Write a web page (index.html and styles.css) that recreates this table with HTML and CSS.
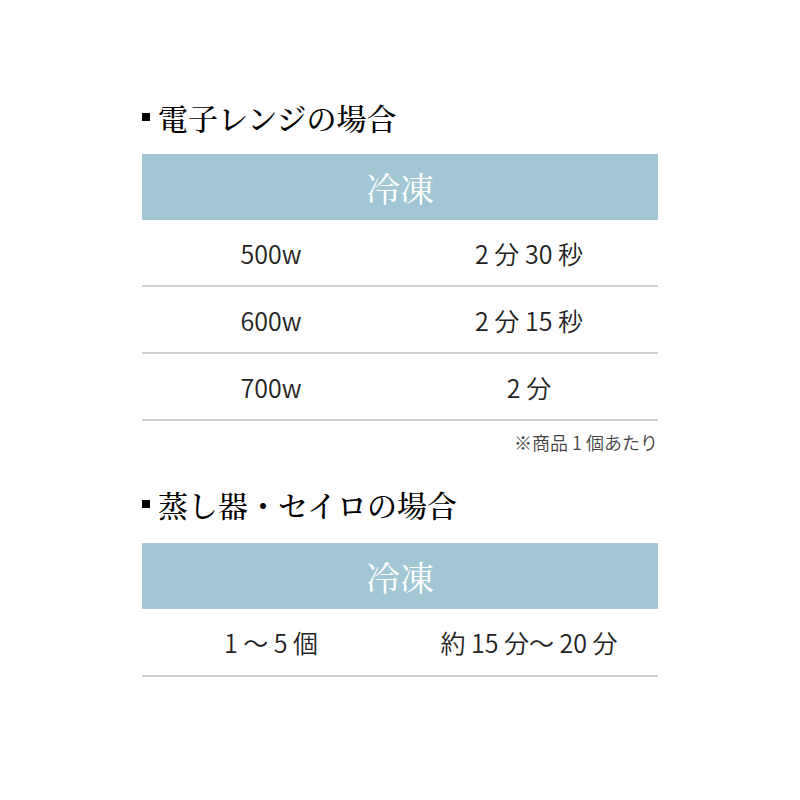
FILE: index.html
```html
<!DOCTYPE html>
<html lang="ja">
<head>
<meta charset="utf-8">
<link rel="stylesheet" href="styles.css">
</head>
<body>
<main class="page">
  <section class="block block-first">
    <h2 class="heading"><span class="bullet"></span>電子レンジの場合</h2>
    <table class="tbl">
      <thead>
        <tr><th colspan="2">冷凍</th></tr>
      </thead>
      <tbody>
        <tr><td>500w</td><td>2 分 30 秒</td></tr>
        <tr><td>600w</td><td>2 分 15 秒</td></tr>
        <tr><td>700w</td><td>2 分</td></tr>
      </tbody>
    </table>
    <p class="note">※商品 1 個あたり</p>
  </section>
  <section class="block block-second">
    <h2 class="heading"><span class="bullet"></span>蒸し器・セイロの場合</h2>
    <table class="tbl">
      <thead>
        <tr><th colspan="2">冷凍</th></tr>
      </thead>
      <tbody>
        <tr><td>1 ～ 5 個</td><td>約 15 分～ 20 分</td></tr>
      </tbody>
    </table>
  </section>
</main>
</body>
</html>
```
FILE: styles.css
```css
html, body {
  margin: 0;
  padding: 0;
  background: #ffffff;
}
.page {
  width: 516px;
  margin: 0 auto;
  padding-top: 99px;
  font-family: "Noto Sans CJK JP", sans-serif;
  color: #222;
}
.heading {
  display: flex;
  align-items: center;
  margin: 0;
  height: 36px;
  font-family: "Liberation Serif", "Noto Serif CJK JP", serif;
  font-weight: 500;
  font-size: 30px;
  color: #000;
  gap: 8px;
}
.bullet {
  width: 8px;
  height: 8px;
  background: #000;
  flex: none;
}
.tbl {
  width: 100%;
  border-collapse: collapse;
  table-layout: fixed;
  margin-top: 19px;
}
.tbl th {
  background: #a2c6d4;
  color: #fff;
  font-family: "Liberation Serif", "Noto Serif CJK JP", serif;
  font-weight: normal;
  font-size: 34px;
  height: 66px;
  padding: 0;
  text-align: center;
}
.tbl td {
  height: 65px;
  padding: 0;
  text-align: center;
  font-size: 25px;
  font-weight: 350;
  color: #222;
  border-bottom: 2px solid #d0d0d0;
}
.note {
  margin: 8px 0 0;
  text-align: right;
  font-size: 18px;
  font-weight: 350;
  color: #444;
}
.block-second {
  margin-top: 31px;
}
.block-second .tbl {
  margin-top: 21px;
}
.block-second .tbl td {
  height: 66px;
}
```
